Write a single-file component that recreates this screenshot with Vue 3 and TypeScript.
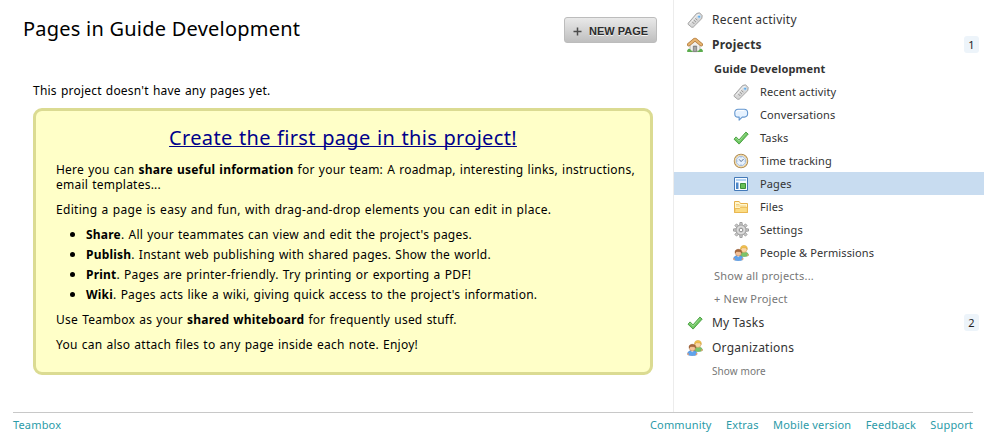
<script setup lang="ts">
type IconName = 'tag' | 'home' | 'chat' | 'check' | 'clock' | 'page' | 'folder' | 'gear' | 'people'

interface NavRow {
  label: string
  kind: 'top' | 'project' | 'sub' | 'link' | 'more'
  icon?: IconName
  bold?: boolean
  active?: boolean
  badge?: number
}

const rows: NavRow[] = [
  { label: 'Recent activity', kind: 'top', icon: 'tag' },
  { label: 'Projects', kind: 'top', icon: 'home', bold: true, badge: 1 },
  { label: 'Guide Development', kind: 'project', bold: true },
  { label: 'Recent activity', kind: 'sub', icon: 'tag' },
  { label: 'Conversations', kind: 'sub', icon: 'chat' },
  { label: 'Tasks', kind: 'sub', icon: 'check' },
  { label: 'Time tracking', kind: 'sub', icon: 'clock' },
  { label: 'Pages', kind: 'sub', icon: 'page', active: true },
  { label: 'Files', kind: 'sub', icon: 'folder' },
  { label: 'Settings', kind: 'sub', icon: 'gear' },
  { label: 'People & Permissions', kind: 'sub', icon: 'people' },
  { label: 'Show all projects...', kind: 'link' },
  { label: '+ New Project', kind: 'link' },
  { label: 'My Tasks', kind: 'top', icon: 'check', badge: 2 },
  { label: 'Organizations', kind: 'top', icon: 'people' },
  { label: 'Show more', kind: 'more' },
]

const features = [
  { name: 'Share', text: ". All your teammates can view and edit the project's pages." },
  { name: 'Publish', text: '. Instant web publishing with shared pages. Show the world.' },
  { name: 'Print', text: '. Pages are printer-friendly. Try printing or exporting a PDF!' },
  { name: 'Wiki', text: ". Pages acts like a wiki, giving quick access to the project's information." },
]

const footerLinks = ['Community', 'Extras', 'Mobile version', 'Feedback', 'Support']
const teeth = [0, 45, 90, 135, 180, 225, 270, 315]
</script>

<template>
  <div class="page">
    <div class="columns">
      <main class="main">
        <header class="head">
          <h1>Pages in Guide Development</h1>
          <button class="new-page" type="button">
            <svg class="plus" viewBox="0 0 9 9"><path d="M4.5 0.5v8M0.5 4.5h8" /></svg>
            <span>NEW PAGE</span>
          </button>
        </header>
        <p class="empty">This project doesn't have any pages yet.</p>
        <section class="box">
          <h2><a href="#">Create the first page in this project!</a></h2>
          <p>Here you can <strong>share useful information</strong> for your team: A roadmap, interesting links, instructions, email templates...</p>
          <p class="roomy">Editing a page is easy and fun, with drag-and-drop elements you can edit in place.</p>
          <ul>
            <li v-for="f in features" :key="f.name"><span><strong>{{ f.name }}</strong>{{ f.text }}</span></li>
          </ul>
          <p>Use Teambox as your <strong>shared whiteboard</strong> for frequently used stuff.</p>
          <p>You can also attach files to any page inside each note. Enjoy!</p>
        </section>
      </main>

      <nav class="sidebar">
        <div
          v-for="(row, i) in rows"
          :key="i"
          class="row"
          :class="[row.kind, { bold: row.bold, active: row.active }]"
        >
          <svg v-if="row.icon" class="icon" viewBox="0 0 16 16">
            <g v-if="row.icon === 'tag'">
              <path d="M1.2 11.2 9.6 1.5 12.6.8 15.2 3.6 14.8 6.6 6.2 15.2 4.6 15.2 1.2 12.4z" fill="#d8d8d8" stroke="#9c9c9c" stroke-width=".9" stroke-linejoin="round" />
              <path d="M3 11.4 10 3.2 12.4 2.4" fill="none" stroke="#f7f7f7" stroke-width="1" />
              <path d="M5.2 9.8 7.4 12M6.8 8 9 10.2M8.4 6.3 10.4 8.3" stroke="#8e8e8e" stroke-width=".9" />
              <circle cx="12.1" cy="4.8" r="1.4" fill="#5aa6e6" stroke="#cfe6fa" stroke-width=".7" />
            </g>
            <g v-else-if="row.icon === 'home'">
              <path d="M3 7 8 3.2 13 7v7.6H3z" fill="#f1efec" stroke="#a5a29c" stroke-width=".7" />
              <path d="M6.3 9h3.4v5.6H6.3z" fill="#8f8f8f" stroke="#6f6f6f" stroke-width=".6" />
              <path d="M7.3 10h1.4v4H7.3z" fill="#b0b0b0" />
              <path d="M1.7 7.6 8 2.400l6.300 5.200" fill="none" stroke="#ad7436" stroke-width="3.400" stroke-linejoin="round" stroke-linecap="round" />
              <path d="M1.700 7.600 8 2.400l6.300 5.200" fill="none" stroke="#e6b471" stroke-width="2.100" stroke-linejoin="round" stroke-linecap="round" />
              <path d="M.2 14.900v-1.700l1.400-1.500 1.500.4 1 1.300 1.500.3v1.200zM15.800 14.900v-1.700l-1.400-1.500-1.500.4-1 1.300-1.500.3v1.200z" fill="#5bac4d" />
            </g>
            <g v-else-if="row.icon === 'chat'">
              <path d="M5 2.200h6.400a3.200 3.200 0 0 1 3.200 3.200v1.500a3.200 3.200 0 0 1-3.200 3.200H9.200L6.100 13.100 6.200 10.100H5A3.200 3.200 0 0 1 1.800 6.900V5.400A3.200 3.200 0 0 1 5 2.200z" fill="#e6f2ff" stroke="#6597cf" stroke-width="1.100" stroke-linejoin="round" />
              <path d="M3.200 5.400a2 2 0 0 1 2-1.800h6" fill="none" stroke="#fff" stroke-width="1" />
            </g>
            <g v-else-if="row.icon === 'check'">
              <path d="M1 9.200 3.100 6.900 6 9.900 12.900 2.100 15.200 4.100 6.100 14.100z" fill="#6dc661" stroke="#429a3a" stroke-width=".9" stroke-linejoin="round" />
              <path d="M2.400 9.100 3.200 8.200 6.100 11.200 13 3.400" fill="none" stroke="#9fdd92" stroke-width=".9" />
            </g>
            <g v-else-if="row.icon === 'clock'">
              <circle cx="8" cy="8" r="6.700" fill="#fff" stroke="#b08b50" stroke-width="1.100" />
              <circle cx="8" cy="8" r="5.800" fill="none" stroke="#efd9a8" stroke-width="1.100" />
              <circle cx="8" cy="8" r="4.700" fill="#e8f2fd" stroke="#94b0d6" stroke-width=".9" />
              <path d="M6.200 6.400 8.100 8.600 10.600 6" fill="none" stroke="#5c7190" stroke-width="1" />
              <path d="M8 4.400v.7M8 10.900v.7M4.400 8h.7M10.900 8h.7" stroke="#8ba0be" stroke-width=".8" />
            </g>
            <g v-else-if="row.icon === 'page'">
              <path d="M1.500 1.500h13v13h-13z" fill="#f7fbff" stroke="#4379b8" />
              <path d="M3 3h10v2H3z" fill="#b3d2f1" />
              <path d="M3 6.500h2.500V13H3z" fill="#4b86c8" />
              <path d="M7.500 7.500h5v5h-5z" fill="#67bf57" stroke="#3c9139" />
            </g>
            <g v-else-if="row.icon === 'folder'">
              <path d="M1.500 13.500v-11h4.700l1.300 2h7v9z" fill="#fff6cd" stroke="#e5b04b" stroke-linejoin="round" />
              <path d="M3 5.500h3.500M3 7h10" stroke="#f0cb75" stroke-width=".9" />
              <path d="M1.600 13.500 2.200 9.500h4.300l1.200-1.200h6.700v5.200z" fill="#fbdc84" stroke="#e9b54e" stroke-width=".9" stroke-linejoin="round" />
            </g>
            <g v-else-if="row.icon === 'gear'">
              <g v-for="t in teeth" :key="t" :transform="`rotate(${t} 8 8)`">
                <path d="M6.600 3.600 6.900.500h2.200l.3 3.100z" fill="#c9c9c9" stroke="#8a8a8a" stroke-width=".7" />
              </g>
              <circle cx="8" cy="8" r="5" fill="#d0d0d0" stroke="#959595" stroke-width=".7" />
              <circle cx="8" cy="8" r="3.300" fill="#bdbdbd" stroke="#ececec" stroke-width=".8" />
              <circle cx="8" cy="8" r="1.700" fill="#fff" stroke="#888" stroke-width=".8" />
            </g>
            <g v-else>
              <path d="M6.300 10.300c0-2.400 1.500-3.200 4.300-3.200s4.900.8 4.900 3.200c-.7.8-2.300 1.200-4.600 1.200s-3.900-.4-4.600-1.200z" fill="#7cc368" stroke="#559b47" stroke-width=".5" />
              <circle cx="10.900" cy="4.300" r="3.100" fill="#fad5a4" stroke="#cc9645" stroke-width=".5" />
              <path d="M7.600 4.500C7.200 1.400 9 .4 11 .4s3.700 1 3.300 4.100l-1-1.500-3.800-.3z" fill="#f2c14c" stroke="#c99832" stroke-width=".4" />
              <path d="M.6 14.300c0-2.600 1.600-3.700 4.700-3.700s4.700 1.100 4.700 3.700c-.9 1-2.500 1.400-4.700 1.400s-3.900-.4-4.700-1.400z" fill="#5fa3ec" stroke="#3b7cca" stroke-width=".5" />
              <path d="M3.700 10.800 5.300 12.300 6.900 10.800z" fill="#e5f1ff" />
              <circle cx="5.400" cy="8.100" r="3" fill="#f5c298" stroke="#b5744a" stroke-width=".5" />
              <path d="M2.100 8.200C1.700 5.200 3.400 4.300 5.400 4.300s3.700.9 3.300 3.900l-1-1.500-4.300-.2z" fill="#a8683c" stroke="#85502c" stroke-width=".4" />
              <path d="M.6 13.300l.9 1.500M10 13.300l-.9 1.500M15.300 9.500l-.9 1.200" stroke="#f5a06c" stroke-width="1.300" />
            </g>
          </svg>
          <span class="label">{{ row.label }}</span>
          <span v-if="row.badge" class="badge">{{ row.badge }}</span>
        </div>
      </nav>
    </div>

    <footer class="footer">
      <a href="#">Teambox</a>
      <div class="footer-links">
        <a v-for="l in footerLinks" :key="l" href="#">{{ l }}</a>
      </div>
    </footer>
  </div>
</template>

<style>
body {
  background: #fff;
}
</style>

<style scoped>
.page {
  width: 999px;
  height: 444px;
  overflow: hidden;
  box-sizing: border-box;
  font: 12px/15px 'Noto Sans', 'Liberation Sans', sans-serif;
  letter-spacing: 0.23px;
  color: #000;
}

.columns {
  display: flex;
  height: 412px;
}

.main {
  width: 673px;
  box-sizing: border-box;
  padding: 17px 16px 0 23px;
}

.head {
  display: flex;
  justify-content: space-between;
  height: 66px;
}

h1,
h2,
p,
ul {
  margin: 0;
  padding: 0;
  font-weight: normal;
}

h1 {
  font-size: 20px;
  line-height: 24px;
  letter-spacing: 0.23px;
}

.new-page {
  display: flex;
  align-items: center;
  gap: 7px;
  box-sizing: border-box;
  width: 93px;
  height: 26px;
  margin: 0;
  padding: 2px 0 0 8px;
  border: 1px solid #bcbcbc;
  border-radius: 3px;
  background: linear-gradient(#e9e9e9, #bfbfbf);
  font: bold 11px/13px 'Liberation Sans', Arial, sans-serif;
  color: #2c2c2c;
  text-shadow: 0 1px 0 #f4f4f4;
  white-space: nowrap;
}

.plus {
  width: 9px;
  height: 9px;
  fill: none;
  stroke: #4c4c4c;
  stroke-width: 1.5;
}

.empty {
  margin-left: 10px;
  letter-spacing: 0.21px;
  word-spacing: 0.8px;
}

.box {
  box-sizing: border-box;
  width: 620px;
  height: 267px;
  margin: 10px 0 0 10px;
  padding: 15px 10px 0;
  border: 3px solid #dbdb92;
  border-radius: 9px;
  background: #ffffc8;
  word-spacing: 0.8px;
}

.box h2 {
  margin-bottom: 12px;
  font-size: 20px;
  line-height: 24px;
  letter-spacing: 0.33px;
  text-align: center;
}

.box h2 a {
  color: #00008b;
  text-decoration: underline;
  text-decoration-thickness: 1px;
  text-underline-offset: 1px;
  text-decoration-skip-ink: none;
}

.box p {
  margin: 0 0 10px 10px;
}

.box strong {
  letter-spacing: 0.2px;
}

.box .roomy {
  letter-spacing: 0.29px;
}

.box ul {
  margin: 0 0 10px 24px;
  list-style: none;
  display: grid;
  gap: 5px;
}

.box li {
  display: flex;
  align-items: center;
  gap: 11px;
}

.box li::before {
  content: '';
  width: 5px;
  height: 5px;
  border-radius: 50%;
  background: #000;
}

.sidebar {
  box-sizing: border-box;
  width: 311px;
  padding-top: 7px;
  border-left: 1px solid #ececec;
}

.row {
  display: flex;
  align-items: center;
  box-sizing: border-box;
  height: 23px;
  font-size: 11px;
  letter-spacing: 0.12px;
  color: #333;
}

.row.top {
  height: 25px;
  padding: 0 5px 0 13px;
  font-size: 12px;
  letter-spacing: 0.24px;
}

.row.bold {
  font-weight: bold;
  letter-spacing: 0.19px;
}

.row.project {
  padding-left: 40px;
}

.row.sub {
  padding-left: 59px;
}

.row.link {
  padding-left: 40px;
  letter-spacing: 0.22px;
  color: #777;
}

.row.more {
  padding-left: 38px;
  font-size: 10px;
  letter-spacing: 0.1px;
  color: #777;
}

.row.active {
  background: #c8dcf0;
}

.icon {
  flex: none;
  width: 16px;
  height: 16px;
  margin-right: 9px;
}

.sub .icon {
  margin-right: 11px;
}

.label {
  flex: 1;
}

.badge {
  width: 15px;
  border-radius: 3px;
  background: #edf4fa;
  font-size: 11px;
  line-height: 17px;
  font-weight: normal;
  text-align: center;
  color: #222;
}

.footer {
  display: flex;
  justify-content: space-between;
  width: 960px;
  margin-left: 13px;
  padding-top: 4px;
  border-top: 1px solid #c8c8c8;
  font-size: 11px;
  letter-spacing: 0.16px;
}

.footer a {
  color: #2b9ba8;
  text-decoration: none;
}

.footer-links {
  display: flex;
  gap: 14.4px;
}
</style>
